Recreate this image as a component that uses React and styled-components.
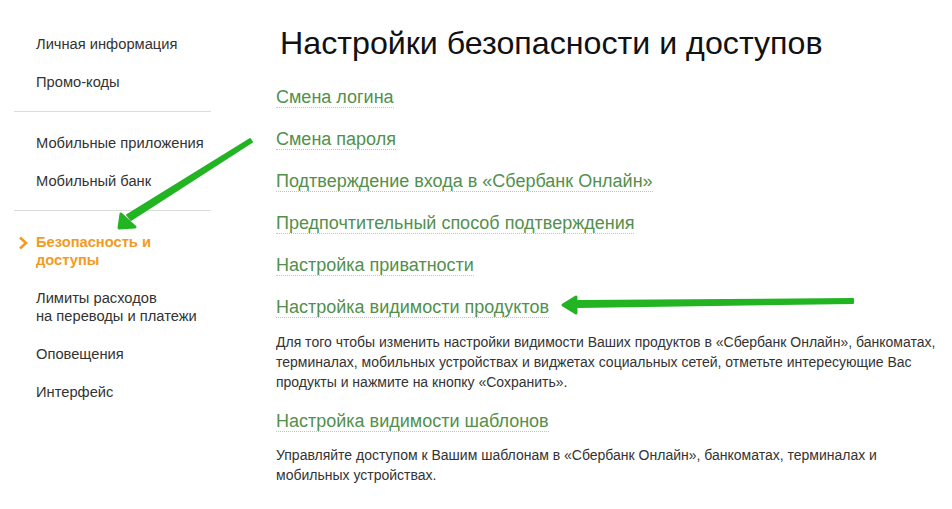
import React from "react";
import styled, { createGlobalStyle } from "styled-components";

const Global = createGlobalStyle`
body {
  margin: 0;
  background: #fff;
  font-family: Arial, "Liberation Sans", sans-serif;
  color: #333;
}
`

const Page = styled.div`
position: relative;
display: flex;
width: 952px;
height: 509px;
overflow: hidden;
background: #fff;
`

const Sidebar = styled.nav`
width: 197px;
margin-left: 14px;
padding-top: 25px;
flex-shrink: 0;
`

const Group = styled.div`
padding: ${p => p.first ? "0" : "12px"} 0 10px;
border-bottom: ${p => p.last ? "none" : "1px solid #dcdcdc"};
`

const NavItem = styled.div`
position: relative;
padding: 10px 0 10px 22px;
font-size: 14.7px;
line-height: 18px;
color: ${p => p.active ? "#f29b22" : "#333"};
font-weight: ${p => p.active ? "bold" : "normal"};
`

const Chevron = styled.svg`
position: absolute;
left: 4px;
top: 13px;
`

const Main = styled.main`
margin-left: 65px;
padding-top: 25px;
`

const Title = styled.h1`
margin: 0 0 15px 4px;
font-size: 32.2px;
line-height: 36px;
font-weight: normal;
color: #111;
`

const LinkRow = styled.div`
padding: 11px 0 ${p => p.gap || 10}px;
`

const SettingLink = styled.a`
display: inline-block;
font-size: 18px;
line-height: 20px;
color: #52904c;
text-decoration: none;
border-bottom: 1px dotted #b9c9b7;
`

const Desc = styled.p`
margin: 0 0 ${p => p.after || 0}px;
width: 672px;
font-size: 14px;
line-height: 20px;
color: #333;
`

const Overlay = styled.svg`
position: absolute;
left: 0;
top: 0;
pointer-events: none;
`

const sideGroups = [
  ["Личная информация", "Промо-коды"],
  ["Мобильные приложения", "Мобильный банк"],
  [["Безопасность и", "доступы"], ["Лимиты расходов", "на переводы и платежи"], "Оповещения", "Интерфейс"],
]

const links = [
  "Смена логина",
  "Смена пароля",
  "Подтверждение входа в «Сбербанк Онлайн»",
  "Предпочтительный способ подтверждения",
  "Настройка приватности",
]

const App = () => {
  return <Page>
    <Global />
    <Sidebar>
      {sideGroups.map((items, gi) =>
        <Group key={gi} first={gi === 0} last={gi === sideGroups.length - 1}>
          {items.map((item, i) => {
            const active = gi === 2 && i === 0;
            const lines = Array.isArray(item) ? item : [item];
            return <NavItem key={i} active={active}>
              {active && <Chevron width="10" height="14" viewBox="0 0 10 14">
                <polyline points="2,1.5 8,7 2,12.5" fill="none" stroke="#f29b22" strokeWidth="2.6" />
              </Chevron>}
              {lines.map((l, k) => <div key={k}>{l}</div>)}
            </NavItem>
          })}
        </Group>
      )}
    </Sidebar>
    <Main>
      <Title>Настройки безопасности и доступов</Title>
      {links.map(l =>
        <LinkRow key={l}><SettingLink href="#">{l}</SettingLink></LinkRow>
      )}
      <LinkRow gap={14}><SettingLink href="#">Настройка видимости продуктов</SettingLink></LinkRow>
      <Desc after={8}>
        Для того чтобы изменить настройки видимости Ваших продуктов в «Сбербанк Онлайн», банкоматах, терминалах, мобильных устройствах и виджетах социальных сетей, отметьте интересующие Вас продукты и нажмите на кнопку «Сохранить».
      </Desc>
      <LinkRow gap={13}><SettingLink href="#">Настройка видимости шаблонов</SettingLink></LinkRow>
      <Desc>
        Управляйте доступом к Вашим шаблонам в «Сбербанк Онлайн», банкоматах, терминалах и мобильных устройствах.
      </Desc>
    </Main>
    <Overlay width="952" height="509" viewBox="0 0 952 509">
      <g fill="#22b422" stroke="#22b422" strokeLinejoin="round" strokeLinecap="round">
        <polygon points="250,139 252,142 131,220 127,215" strokeWidth="2" />
        <polygon points="119,228 121,214 135,227" strokeWidth="3" />
        <polygon points="853,299 853,303 578,307 578,301" strokeWidth="2" />
        <polygon points="563,305 576,297 576,313" strokeWidth="3" />
      </g>
    </Overlay>
  </Page>
}

export default App;
